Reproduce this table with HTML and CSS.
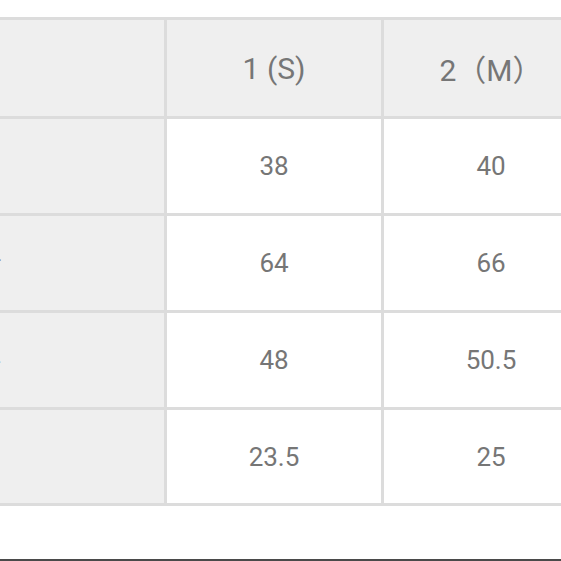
FILE: index.html
```html
<!DOCTYPE html>
<html lang="ko">
<head>
<meta charset="utf-8">
<link rel="stylesheet" href="styles.css">
</head>
<body>
<div class="page">
  <table class="size-table">
    <colgroup>
      <col class="c-label">
      <col class="c-size">
      <col class="c-size">
    </colgroup>
    <tr class="head">
      <th class="label"></th>
      <th>1 (S)</th>
      <th>2（M）</th>
    </tr>
    <tr>
      <td class="label">어깨</td>
      <td>38</td>
      <td>40</td>
    </tr>
    <tr>
      <td class="label">총장</td>
      <td>64</td>
      <td>66</td>
    </tr>
    <tr>
      <td class="label">가슴</td>
      <td>48</td>
      <td>50.5</td>
    </tr>
    <tr class="last">
      <td class="label">소매</td>
      <td>23.5</td>
      <td>25</td>
    </tr>
  </table>
  <div class="rule"></div>
</div>
</body>
</html>
```
FILE: styles.css
```css
html, body {
  margin: 0;
  padding: 0;
  background: #ffffff;
  overflow: hidden;
}
.page {
  width: 561px;
  height: 561px;
  position: relative;
  overflow: hidden;
  font-family: Roboto, "Noto Sans CJK KR", sans-serif;
}
.size-table {
  margin-top: 17px;
  margin-left: -212px;
  width: 810px;
  min-width: 810px;
  border-collapse: collapse;
  table-layout: fixed;
}
.c-label { width: 376px; }
.c-size { width: 217px; }
.size-table th,
.size-table td {
  border: 3px solid #dcdcdc;
  height: 94px;
  padding: 0;
  text-align: center;
  vertical-align: middle;
  color: #767676;
  font-size: 26px;
  font-weight: 400;
  background: #ffffff;
  white-space: nowrap;
}
.size-table .head th {
  height: 96px;
  background: #efefef;
  font-size: 30px;
}
.size-table .last td {
  height: 93px;
}
.size-table .label {
  background: #efefef;
  color: #8a8a8a;
}
.rule {
  position: absolute;
  left: 0;
  right: 0;
  top: 559px;
  height: 2px;
  background: #4a4a4a;
}
```
